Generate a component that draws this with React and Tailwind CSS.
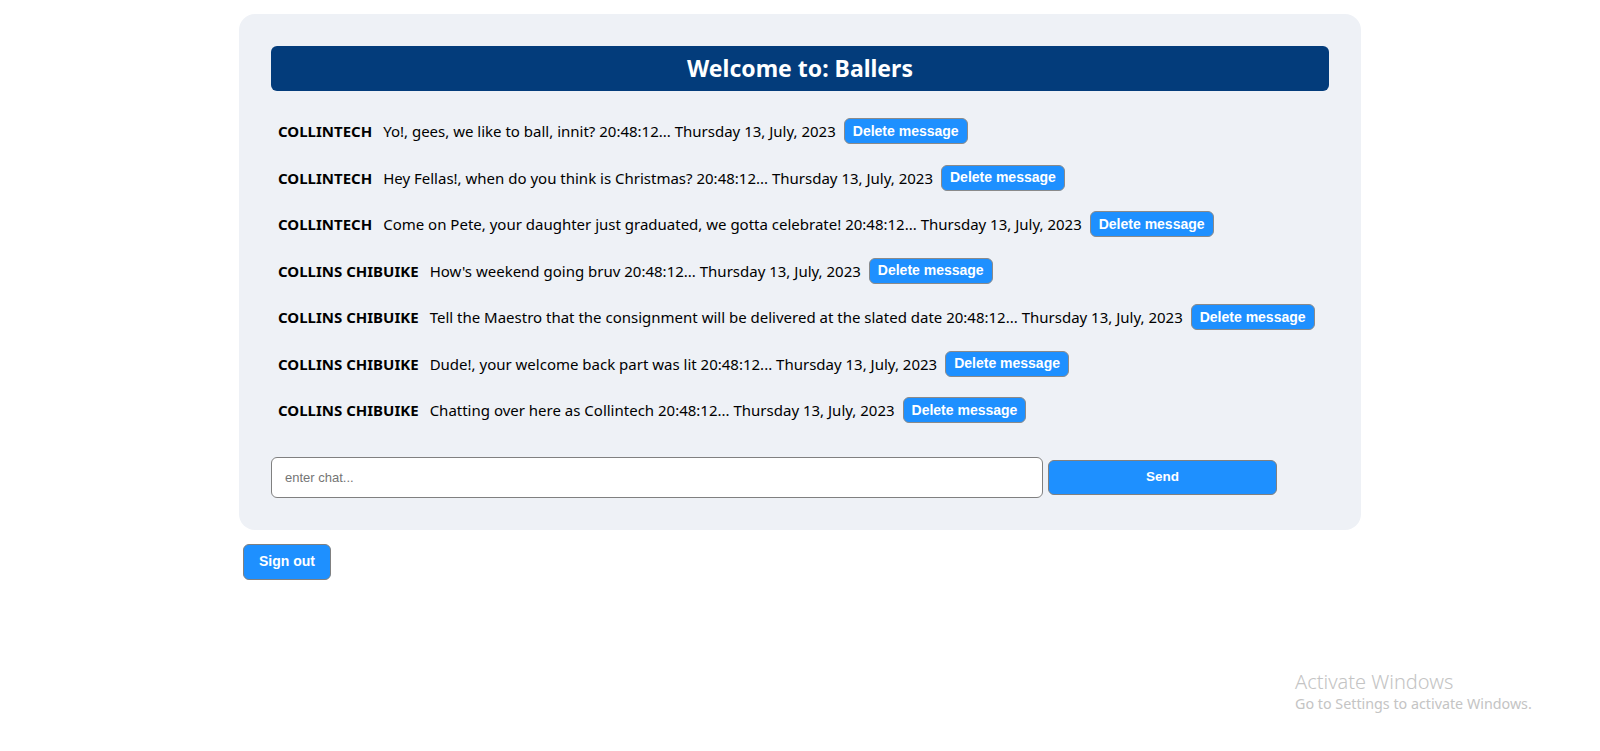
import React from "react";

const messages = [
  { name: "COLLINTECH", text: "Yo!, gees, we like to ball, innit?" },
  { name: "COLLINTECH", text: "Hey Fellas!, when do you think is Christmas?" },
  { name: "COLLINTECH", text: "Come on Pete, your daughter just graduated, we gotta celebrate!" },
  { name: "COLLINS CHIBUIKE", text: "How's weekend going bruv" },
  { name: "COLLINS CHIBUIKE", text: "Tell the Maestro that the consignment will be delivered at the slated date" },
  { name: "COLLINS CHIBUIKE", text: "Dude!, your welcome back part was lit" },
  { name: "COLLINS CHIBUIKE", text: "Chatting over here as Collintech" },
];

export default function App() {
  return (
    <div className="relative min-h-[751px] bg-white pt-[14px] font-['Noto_Sans',sans-serif] text-black">
      <div className="mx-auto w-[1122px] rounded-2xl bg-[#eef1f6] px-8 pt-8 pb-8">
        <div className="flex h-[45px] items-center justify-center rounded-md bg-[#033c7b]">
          <h1 className="text-[23px] font-bold text-white">Welcome to: Ballers</h1>
        </div>
        <div className="mt-[17px] flex flex-col">
          {messages.map((m, i) => (
            <div key={i} className="flex h-[46.5px] items-center pl-[7px] text-[15px]">
              <span className="font-bold">{m.name}</span>
              <span className="ml-[11px]">{m.text} 20:48:12... Thursday 13, July, 2023</span>
              <button className="ml-2 h-[26px] rounded-md border border-[#8a8a8a] bg-[#1e90ff] px-2 font-['Liberation_Sans',sans-serif] text-[14px] font-bold text-white">
                Delete message
              </button>
            </div>
          ))}
        </div>
        <div className="mt-[23px] flex items-center">
          <input
            placeholder="enter chat..."
            className="h-[41px] w-[772px] rounded-md border border-[#808080] bg-white px-[13px] font-['Liberation_Sans',sans-serif] text-[13px] outline-none placeholder:text-[#757575]"
          />
          <button className="ml-[5px] h-[35px] w-[229px] rounded-md border border-[#808080] bg-[#1e90ff] font-['Liberation_Sans',sans-serif] text-[13.5px] font-bold text-white">
            Send
          </button>
        </div>
      </div>
      <div className="mx-auto mt-[14px] w-[1122px]">
        <button className="ml-1 h-[36px] w-[88px] rounded-md border border-[#808080] bg-[#1e90ff] font-['Liberation_Sans',sans-serif] text-[14px] font-bold text-white">
          Sign out
        </button>
      </div>
      <div className="pointer-events-none absolute left-[1295px] top-[669px] text-[#c4c4c4]">
        <div className="text-[20px] font-light leading-[26px]">Activate Windows</div>
        <div className="text-[14.3px] leading-[18px]">Go to Settings to activate Windows.</div>
      </div>
    </div>
  );
}
